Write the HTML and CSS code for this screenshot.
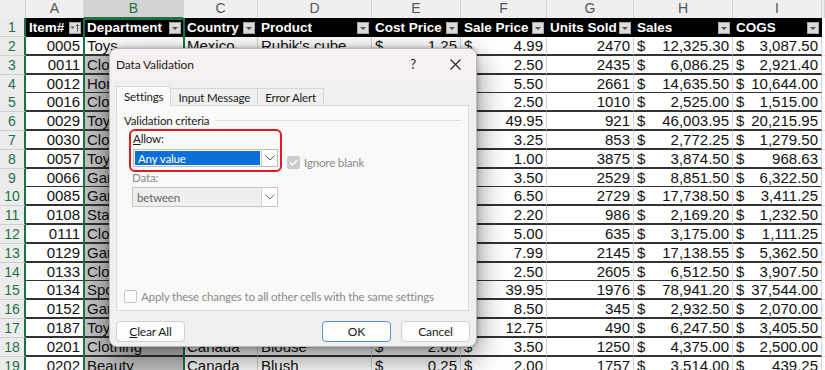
FILE: index.html
```html
<!DOCTYPE html>
<html lang="en">
<head>
    <meta charset="UTF-8">
    <title>Data Validation</title>
    <link rel="stylesheet" href="styles.css">
</head>
<body>
    <div class="sheet">
        <div class="row cols">
            <div class="corner"></div>
            <div class="ch">A</div><div class="ch on">B</div><div class="ch">C</div><div class="ch">D</div><div class="ch">E</div>
            <div class="ch">F</div><div class="ch">G</div><div class="ch">H</div><div class="ch">I</div><div class="ch"></div>
        </div>
        <div class="row head">
            <div class="rh">1</div>
            <div class="th">Item#<span class="fb sort"><svg width="10" height="10" viewBox="0 0 10 10"><path d="M0.5 3.5h4l-2 2.5z" fill="#555"/><path d="M7.5 1.5v7M6 3l1.5-1.5 1.5 1.5" stroke="#555" fill="none"/></svg></span></div>
            <div class="th">Department<span class="fb"></span></div>
            <div class="th">Country<span class="fb"></span></div>
            <div class="th">Product<span class="fb"></span></div>
            <div class="th">Cost Price<span class="fb"></span></div>
            <div class="th">Sale Price<span class="fb"></span></div>
            <div class="th">Units Sold<span class="fb"></span></div>
            <div class="th">Sales<span class="fb"></span></div>
            <div class="th">COGS<span class="fb"></span></div>
            <div class="c blank"></div>
        </div>
        <div class="row"><div class="rh">2</div><div class="c r">0005</div><div class="c act">Toys</div><div class="c">Mexico</div><div class="c">Rubik's cube</div><div class="c acc"><span>$</span>1.25</div><div class="c acc"><span>$</span>4.99</div><div class="c r">2470</div><div class="c acc"><span>$</span>12,325.30</div><div class="c acc"><span>$</span>3,087.50</div><div class="c blank"></div></div>
        <div class="row"><div class="rh">3</div><div class="c r">0011</div><div class="c sel">Clothing</div><div class="c">Canada</div><div class="c">Socks</div><div class="c acc"><span>$</span>1.20</div><div class="c acc"><span>$</span>2.50</div><div class="c r">2435</div><div class="c acc"><span>$</span>6,086.25</div><div class="c acc"><span>$</span>2,921.40</div><div class="c blank"></div></div>
        <div class="row"><div class="rh">4</div><div class="c r">0012</div><div class="c sel">Home</div><div class="c">USA</div><div class="c">Candle</div><div class="c acc"><span>$</span>4.00</div><div class="c acc"><span>$</span>5.50</div><div class="c r">2661</div><div class="c acc"><span>$</span>14,635.50</div><div class="c acc"><span>$</span>10,644.00</div><div class="c blank"></div></div>
        <div class="row"><div class="rh">5</div><div class="c r">0016</div><div class="c sel">Clothing</div><div class="c">Mexico</div><div class="c">Scarf</div><div class="c acc"><span>$</span>1.50</div><div class="c acc"><span>$</span>2.50</div><div class="c r">1010</div><div class="c acc"><span>$</span>2,525.00</div><div class="c acc"><span>$</span>1,515.00</div><div class="c blank"></div></div>
        <div class="row"><div class="rh">6</div><div class="c r">0029</div><div class="c sel">Toys</div><div class="c">USA</div><div class="c">Train set</div><div class="c acc"><span>$</span>21.95</div><div class="c acc"><span>$</span>49.95</div><div class="c r">921</div><div class="c acc"><span>$</span>46,003.95</div><div class="c acc"><span>$</span>20,215.95</div><div class="c blank"></div></div>
        <div class="row"><div class="rh">7</div><div class="c r">0030</div><div class="c sel">Clothing</div><div class="c">Canada</div><div class="c">Gloves</div><div class="c acc"><span>$</span>1.50</div><div class="c acc"><span>$</span>3.25</div><div class="c r">853</div><div class="c acc"><span>$</span>2,772.25</div><div class="c acc"><span>$</span>1,279.50</div><div class="c blank"></div></div>
        <div class="row"><div class="rh">8</div><div class="c r">0057</div><div class="c sel">Toys</div><div class="c">Mexico</div><div class="c">Yo-yo</div><div class="c acc"><span>$</span>0.25</div><div class="c acc"><span>$</span>1.00</div><div class="c r">3875</div><div class="c acc"><span>$</span>3,874.50</div><div class="c acc"><span>$</span>968.63</div><div class="c blank"></div></div>
        <div class="row"><div class="rh">9</div><div class="c r">0066</div><div class="c sel">Garden</div><div class="c">USA</div><div class="c">Seeds</div><div class="c acc"><span>$</span>2.50</div><div class="c acc"><span>$</span>3.50</div><div class="c r">2529</div><div class="c acc"><span>$</span>8,851.50</div><div class="c acc"><span>$</span>6,322.50</div><div class="c blank"></div></div>
        <div class="row"><div class="rh">10</div><div class="c r">0085</div><div class="c sel">Garden</div><div class="c">Canada</div><div class="c">Trowel</div><div class="c acc"><span>$</span>1.25</div><div class="c acc"><span>$</span>6.50</div><div class="c r">2729</div><div class="c acc"><span>$</span>17,738.50</div><div class="c acc"><span>$</span>3,411.25</div><div class="c blank"></div></div>
        <div class="row"><div class="rh">11</div><div class="c r">0108</div><div class="c sel">Stationery</div><div class="c">USA</div><div class="c">Notebook</div><div class="c acc"><span>$</span>1.25</div><div class="c acc"><span>$</span>2.20</div><div class="c r">986</div><div class="c acc"><span>$</span>2,169.20</div><div class="c acc"><span>$</span>1,232.50</div><div class="c blank"></div></div>
        <div class="row"><div class="rh">12</div><div class="c r">0111</div><div class="c sel">Clothing</div><div class="c">Mexico</div><div class="c">Hat</div><div class="c acc"><span>$</span>1.75</div><div class="c acc"><span>$</span>5.00</div><div class="c r">635</div><div class="c acc"><span>$</span>3,175.00</div><div class="c acc"><span>$</span>1,111.25</div><div class="c blank"></div></div>
        <div class="row"><div class="rh">13</div><div class="c r">0129</div><div class="c sel">Garden</div><div class="c">USA</div><div class="c">Hose</div><div class="c acc"><span>$</span>2.50</div><div class="c acc"><span>$</span>7.99</div><div class="c r">2145</div><div class="c acc"><span>$</span>17,138.55</div><div class="c acc"><span>$</span>5,362.50</div><div class="c blank"></div></div>
        <div class="row"><div class="rh">14</div><div class="c r">0133</div><div class="c sel">Clothing</div><div class="c">Canada</div><div class="c">T-shirt</div><div class="c acc"><span>$</span>1.50</div><div class="c acc"><span>$</span>2.50</div><div class="c r">2605</div><div class="c acc"><span>$</span>6,512.50</div><div class="c acc"><span>$</span>3,907.50</div><div class="c blank"></div></div>
        <div class="row"><div class="rh">15</div><div class="c r">0134</div><div class="c sel">Sports</div><div class="c">USA</div><div class="c">Tennis racket</div><div class="c acc"><span>$</span>19.00</div><div class="c acc"><span>$</span>39.95</div><div class="c r">1976</div><div class="c acc"><span>$</span>78,941.20</div><div class="c acc"><span>$</span>37,544.00</div><div class="c blank"></div></div>
        <div class="row"><div class="rh">16</div><div class="c r">0152</div><div class="c sel">Garden</div><div class="c">Mexico</div><div class="c">Rake</div><div class="c acc"><span>$</span>6.00</div><div class="c acc"><span>$</span>8.50</div><div class="c r">345</div><div class="c acc"><span>$</span>2,932.50</div><div class="c acc"><span>$</span>2,070.00</div><div class="c blank"></div></div>
        <div class="row"><div class="rh">17</div><div class="c r">0187</div><div class="c sel">Toys</div><div class="c">USA</div><div class="c">Puzzle</div><div class="c acc"><span>$</span>6.95</div><div class="c acc"><span>$</span>12.75</div><div class="c r">490</div><div class="c acc"><span>$</span>6,247.50</div><div class="c acc"><span>$</span>3,405.50</div><div class="c blank"></div></div>
        <div class="row"><div class="rh">18</div><div class="c r">0201</div><div class="c sel">Clothing</div><div class="c">Canada</div><div class="c">Blouse</div><div class="c acc"><span>$</span>2.00</div><div class="c acc"><span>$</span>3.50</div><div class="c r">1250</div><div class="c acc"><span>$</span>4,375.00</div><div class="c acc"><span>$</span>2,500.00</div><div class="c blank"></div></div>
        <div class="row"><div class="rh">19</div><div class="c r">0202</div><div class="c sel">Beauty</div><div class="c">Canada</div><div class="c">Blush</div><div class="c acc"><span>$</span>0.25</div><div class="c acc"><span>$</span>2.00</div><div class="c r">1757</div><div class="c acc"><span>$</span>3,514.00</div><div class="c acc"><span>$</span>439.25</div><div class="c blank"></div></div>
        <div class="selection"></div>
    </div>

    <div class="dialog">
        <div class="titlebar">
            <span class="title">Data Validation</span>
            <span class="help">?</span>
            <span class="close"><svg width="11" height="11" viewBox="0 0 11 11"><path d="M0.5 0.5l10 10M10.5 0.5l-10 10" stroke="#222" stroke-width="1.1"/></svg></span>
        </div>
        <div class="tabs">
            <div class="tab on">Settings</div>
            <div class="tab">Input Message</div>
            <div class="tab">Error Alert</div>
        </div>
        <div class="panel">
            <div class="legend"><span>Validation criteria</span></div>
            <div class="crit">
                <div class="allow">
                    <div class="lbl"><u>A</u>llow:</div>
                    <div class="select">
                        <span class="val">Any value</span>
                        <span class="arrow"><svg width="10" height="6" viewBox="0 0 10 6"><path d="M0.5 0.5l4.5 4.5 4.5-4.5" stroke="#555" fill="none"/></svg></span>
                    </div>
                </div>
                <div class="check dis">
                    <span class="box"><svg width="9" height="7" viewBox="0 0 9 7"><path d="M1 3.5l2.5 2.5 4.5-5" stroke="#fff" stroke-width="1.3" fill="none"/></svg></span>
                    Ignore blank
                </div>
            </div>
            <div class="lbl dim data">Data:</div>
            <div class="select off">
                <span class="val">between</span>
                <span class="arrow"><svg width="10" height="6" viewBox="0 0 10 6"><path d="M0.5 0.5l4.5 4.5 4.5-4.5" stroke="#777" fill="none"/></svg></span>
            </div>
            <div class="check apply">
                <span class="box"></span>
                Apply these changes to all other cells with the same settings
            </div>
        </div>
        <div class="buttons">
            <button class="btn"><u>C</u>lear All</button>
            <span class="grow"></span>
            <button class="btn ok">OK</button>
            <button class="btn">Cancel</button>
        </div>
    </div>
</body>
</html>
```

FILE: styles.css
```css
*{
    box-sizing: border-box;
}
body{
    margin: 0;
    background: #fff;
    overflow: hidden;
    font-family: "Liberation Sans Narrow", "Liberation Sans", Arial, sans-serif;
}
.sheet{
    position: relative;
    width: 825px;
    height: 370px;
    overflow: hidden;
}
.row{
    display: grid;
    grid-template-columns: 26px 58px 100px 74px 114px 89px 86px 87px 99px 89px 1fr;
    height: 18.8px;
    font-size: 15px;
    color: #111;
}
.cols{
    height: 18px;
    background: #efefef;
}
.corner{
    border-right: 1px solid #d0d0d0;
    border-bottom: 1px solid #c8c8c8;
}
.ch{
    font-family: "Liberation Sans", Arial, sans-serif;
    font-size: 14px;
    color: #555;
    text-align: center;
    line-height: 17px;
    border-right: 1px solid #d6d6d6;
    border-bottom: 1px solid #c8c8c8;
}
.ch.on{
    background: #d3d3d3;
    color: #1e7145;
    border-bottom: 2px solid #1e7145;
}
.head{
    height: 19px;
}
.rh{
    background: #ececec;
    color: #1e7145;
    text-align: center;
    font-family: "Liberation Sans", Arial, sans-serif;
    font-size: 14px;
    line-height: 18px;
    border-bottom: 1px solid #cfcfcf;
    border-right: 2px solid #1e7145;
}
.th{
    background: #000;
    color: #fff;
    font-family: "Liberation Sans", Arial, sans-serif;
    font-weight: bold;
    font-size: 13.5px;
    line-height: 19px;
    padding-left: 3px;
    display: flex;
    align-items: center;
    white-space: nowrap;
    overflow: hidden;
}
.fb{
    margin-left: auto;
    margin-right: 3px;
    width: 12px;
    height: 12px;
    flex: none;
    background: #dcdcdc;
    border: 1px solid #a8a8a8;
    position: relative;
}
.fb::after{
    content: "";
    position: absolute;
    left: 2px;
    top: 4px;
    border-left: 3px solid transparent;
    border-right: 3px solid transparent;
    border-top: 3px solid #555;
}
.fb.sort::after{
    display: none;
}
.fb.sort svg{
    display: block;
}
.c{
    padding: 0 3px;
    line-height: 17px;
    white-space: nowrap;
    overflow: hidden;
    border-right: 1px solid #d6d6d6;
    border-bottom: 2px solid #333;
    background: #fff;
}
.c.r{
    text-align: right;
}
.acc{
    display: flex;
    justify-content: space-between;
}
.sel{
    background: #c6c6c6;
}
.act{
    background: #fff;
}
.blank{
    border-right: 0;
    border-bottom-color: #e0e0e0;
    border-bottom-width: 1px;
    background: #fff;
}
.head .blank{
    border-bottom: 0;
}
.selection{
    position: absolute;
    left: 83px;
    top: 18px;
    width: 102px;
    height: 360px;
    border: 2px solid #1e7145;
    pointer-events: none;
}

/* dialog */
.dialog{
    position: absolute;
    left: 109px;
    top: 48px;
    width: 368px;
    height: 299px;
    background: #f0f0f0;
    border: 1px solid #b9b9b9;
    border-radius: 8px;
    box-shadow: 0 10px 30px rgba(0,0,0,0.5), 0 0 4px rgba(0,0,0,0.3);
    font-family: Lato, "Noto Sans", sans-serif;
    font-size: 11.5px;
    letter-spacing: -0.15px;
    color: #1a1a1a;
    display: flex;
    flex-direction: column;
    overflow: hidden;
}
.titlebar{
    height: 30px;
    background: #f7f0f0;
    display: flex;
    align-items: center;
    padding-left: 6px;
    flex: none;
}
.title{
    font-size: 12px;
}
.help{
    margin-left: auto;
    width: 20px;
    text-align: center;
    font-size: 13px;
    margin-right: 11px;
}
.close{
    width: 42px;
    display: flex;
    justify-content: center;
}
.close svg{
    display: block;
}
.tabs{
    display: flex;
    align-items: flex-end;
    padding: 6px 6px 0;
    height: 26px;
    flex: none;
}
.tab{
    height: 17px;
    padding: 0 7px;
    line-height: 17px;
    border: 1px solid #d6d6d6;
    border-bottom: 0;
    background: #f0f0f0;
    margin-right: -1px;
}
.tab.on{
    height: 20px;
    line-height: 19px;
    background: #f9f9f9;
    padding: 0 7px;
    position: relative;
    z-index: 1;
    margin-bottom: -1px;
}
.panel{
    margin: 0 7px 0 6px;
    height: 206px;
    background: #f9f9f9;
    border: 1px solid #dcdcdc;
    padding: 6px 7px 7px;
    display: flex;
    flex-direction: column;
    flex: none;
}
.legend{
    display: flex;
    align-items: center;
    height: 16px;
}
.legend::after{
    content: "";
    flex: 1;
    height: 1px;
    background: #dcdcdc;
    margin-left: 6px;
}
.crit{
    display: flex;
    align-items: flex-end;
    margin: 1px 0 0 5px;
}
.allow{
    width: 153px;
    border: 2px solid #e01b1b;
    border-radius: 6px;
    padding: 0 2px 3px;
}
.lbl{
    height: 16px;
    line-height: 16px;
}
.allow .lbl{
    margin-bottom: 2px;
}
.dim{
    color: #8a8a8a;
}
.select{
    height: 18px;
    border: 1px solid #bdbdbd;
    background: #fff;
    display: flex;
}
.select .val{
    flex: 1;
    background: #0a6fd6;
    color: #fff;
    line-height: 15px;
    padding-left: 3px;
    margin: 1px;
}
.select .arrow{
    width: 16px;
    border-left: 1px solid #cfcfcf;
    display: flex;
    align-items: center;
    justify-content: center;
    background: #fff;
}
.check{
    display: flex;
    align-items: center;
    gap: 4px;
}
.check .box{
    width: 13px;
    height: 13px;
    border: 1px solid #b4b4b4;
    border-radius: 2px;
    background: #fff;
    display: flex;
    align-items: center;
    justify-content: center;
}
.check.dis{
    color: #8a8a8a;
    margin: 0 0 3px 5px;
}
.check.dis .box{
    background: #cccccc;
    border-color: #cccccc;
}
.data{
    margin: -2px 0 1px 8px;
}
.select.off{
    width: 146px;
    height: 20px;
    margin-left: 8px;
    background: #efefef;
    border-color: #c6c6c6;
}
.select.off .val{
    background: none;
    color: #666;
    line-height: 17px;
    padding-left: 3px;
}
.apply{
    margin-top: auto;
    color: #8a8a8a;
    white-space: nowrap;
}
.apply .box{
    border-color: #c4c4c4;
    background: #fbfbfb;
}
.buttons{
    display: flex;
    padding: 10px 6px 0;
    gap: 10px;
}
.grow{
    flex: 1;
}
.btn{
    width: 69px;
    height: 21px;
    border: 1px solid #d0d0d0;
    border-radius: 4px;
    background: #fdfdfd;
    font-family: Lato, "Noto Sans", sans-serif;
    font-size: 12px;
    letter-spacing: -0.15px;
    color: #1a1a1a;
    padding: 0;
}
.btn.ok{
    border-color: #5b8fd0;
}
```
